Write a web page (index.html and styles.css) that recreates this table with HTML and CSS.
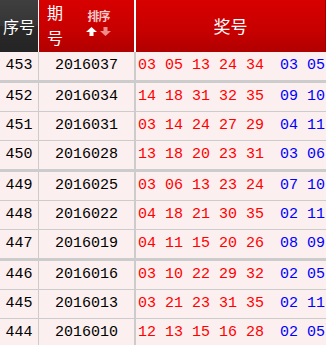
FILE: index.html
```html
<!DOCTYPE html>
<html>
<head>
<meta charset="utf-8">
<link rel="stylesheet" href="styles.css">
</head>
<body>
<div class="tbl">
  <div class="head">
    <div class="c1 h1">序号</div>
    <div class="c2 h2">
      <span class="qh">期号</span>
      <span class="sort">
        <span class="sort-t">排序</span>
        <span class="arrows">
          <svg width="11" height="9" viewBox="0 0 11 9"><path d="M5.5 0 L11 5 L7.5 5 L7.5 9 L3.5 9 L3.5 5 L0 5 Z" fill="#ffffff"/></svg>
          <svg width="11" height="9" viewBox="0 0 11 9"><path d="M5.5 9 L11 4 L7.5 4 L7.5 0 L3.5 0 L3.5 4 L0 4 Z" fill="#ee8c8c"/></svg>
        </span>
      </span>
    </div>
    <div class="c3 h3">奖号</div>
  </div>
  <div class="row thick"><div class="c1">453</div><div class="c2">2016037</div><div class="c3"><span class="r">03 05 13 24 34</span><span class="b">03 05</span></div></div>
  <div class="row"><div class="c1">452</div><div class="c2">2016034</div><div class="c3"><span class="r">14 18 31 32 35</span><span class="b">09 10</span></div></div>
  <div class="row"><div class="c1">451</div><div class="c2">2016031</div><div class="c3"><span class="r">03 14 24 27 29</span><span class="b">04 11</span></div></div>
  <div class="row thick"><div class="c1">450</div><div class="c2">2016028</div><div class="c3"><span class="r">13 18 20 23 31</span><span class="b">03 06</span></div></div>
  <div class="row"><div class="c1">449</div><div class="c2">2016025</div><div class="c3"><span class="r">03 06 13 23 24</span><span class="b">07 10</span></div></div>
  <div class="row"><div class="c1">448</div><div class="c2">2016022</div><div class="c3"><span class="r">04 18 21 30 35</span><span class="b">02 11</span></div></div>
  <div class="row thick"><div class="c1">447</div><div class="c2">2016019</div><div class="c3"><span class="r">04 11 15 20 26</span><span class="b">08 09</span></div></div>
  <div class="row"><div class="c1">446</div><div class="c2">2016016</div><div class="c3"><span class="r">03 10 22 29 32</span><span class="b">02 05</span></div></div>
  <div class="row"><div class="c1">445</div><div class="c2">2016013</div><div class="c3"><span class="r">03 21 23 31 35</span><span class="b">02 11</span></div></div>
  <div class="row"><div class="c1">444</div><div class="c2">2016010</div><div class="c3"><span class="r">12 13 15 16 28</span><span class="b">02 05</span></div></div>
</div>
</body>
</html>
```
FILE: styles.css
```css
html, body {
  margin: 0;
  padding: 0;
  background: #fcefef;
}
.tbl {
  width: 326px;
  overflow: hidden;
}
.head {
  display: flex;
  height: 52px;
  font-family: "Noto Sans CJK SC", sans-serif;
  color: #ffffff;
}
.c1 {
  width: 38px;
  flex: none;
  border-right: 1px solid #cccccc;
  text-align: center;
}
.c2 {
  width: 95px;
  flex: none;
  border-right: 2px solid #cccccc;
  text-align: center;
}
.c3 {
  flex: 1;
  white-space: pre;
  overflow: hidden;
  padding-left: 2px;
}
.head .c1, .head .c2 {
  border-right-color: #ffffff;
}
.h1 {
  background: linear-gradient(#3f3f3f, #353535 50%, #2a2a2a 51%, #242424);
  font-size: 16px;
  line-height: 52px;
}
.h2, .h3 {
  background: linear-gradient(#d80000, #c70000 60%, #b00000);
}
.h2 {
  display: flex;
  align-items: flex-start;
  text-align: left;
}
.qh {
  width: 17px;
  margin-left: 8px;
  margin-top: 0;
  font-size: 16px;
  line-height: 25px;
  word-break: break-all;
}
.sort {
  display: flex;
  flex-direction: column;
  align-items: center;
  margin-left: 22px;
  margin-top: 8px;
}
.sort-t {
  font-size: 12px;
  font-weight: bold;
  line-height: 15px;
  color: #f7c8c8;
  letter-spacing: -1px;
}
.arrows {
  display: flex;
  gap: 3px;
  margin-top: 4px;
}
.arrows svg {
  display: block;
}
.h3 {
  text-align: center;
  font-size: 17px;
  line-height: 52px;
  padding-left: 0;
  border-right: 1px solid #a00000;
}
.row {
  display: flex;
  height: 28px;
  border-bottom: 1px solid #cccccc;
  font-family: "Liberation Mono", monospace;
  font-size: 15px;
  line-height: 28px;
  color: #000000;
}
.row.thick {
  border-bottom: 3px solid #cccccc;
}
.r {
  color: #ff0000;
}
.b {
  color: #0000ff;
  margin-left: 16px;
}
```
